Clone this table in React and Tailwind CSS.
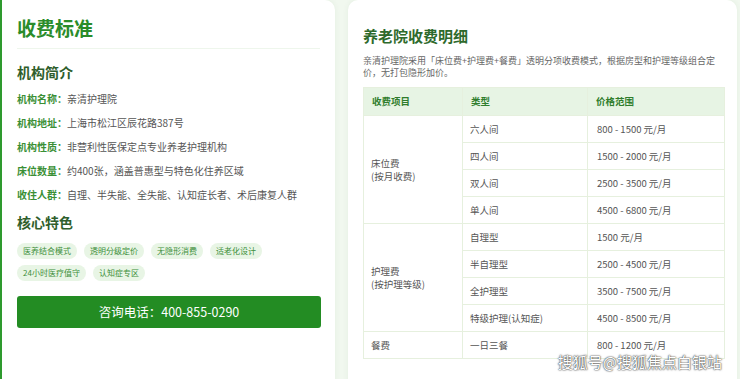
const INFO = [
  ['机构名称：', '亲清护理院'],
  ['机构地址：', '上海市松江区辰花路387号'],
  ['机构性质：', '非营利性医保定点专业养老护理机构'],
  ['床位数量：', '约400张，涵盖普惠型与特色化住养区域'],
  ['收住人群：', '自理、半失能、全失能、认知症长者、术后康复人群'],
];

const TAGS = [['医养结合模式', '透明分级定价', '无隐形消费', '适老化设计'], ['24小时医疗值守', '认知症专区']];

const GROUPS = [
  {
    name: ['床位费', '(按月收费)'],
    rows: [
      ['六人间', '800 - 1500 元/月'],
      ['四人间', '1500 - 2000 元/月'],
      ['双人间', '2500 - 3500 元/月'],
      ['单人间', '4500 - 6800 元/月'],
    ],
  },
  {
    name: ['护理费', '(按护理等级)'],
    rows: [
      ['自理型', '1500 元/月'],
      ['半自理型', '2500 - 4500 元/月'],
      ['全护理型', '3500 - 7500 元/月'],
      ['特级护理(认知症)', '4500 - 8500 元/月'],
    ],
  },
  {
    name: ['餐费'],
    rows: [['一日三餐', '800 - 1200 元/月']],
  },
];

function LeftCard() {
  return (
    <div className="w-[335px] h-[400px] shrink-0 bg-white border-l-2 border-[#2e9a2e] rounded-tr-[10px] pl-[15px] pr-[15px] pt-[15px] shadow-[0_0_6px_rgba(0,80,0,0.06)]">
      <h1 className="text-[19px] leading-[26px] font-bold text-[#2a8c2a]">收费标准</h1>
      <div className="mt-[7px] border-b border-[#eef6ec]" />
      <h2 className="mt-[13px] text-[14px] leading-[20px] font-bold text-[#2f5e2c]">机构简介</h2>
      <div className="mt-[4px]">
        {INFO.map(([k, v]) => (
          <div key={k} className="flex items-center h-[24px] text-[10px]">
            <span className="font-bold text-[#3a8f35]">{k}</span>
            <span className="text-[#555]">{v}</span>
          </div>
        ))}
      </div>
      <h2 className="mt-[6px] text-[14px] leading-[20px] font-bold text-[#2f5e2c]">核心特色</h2>
      <div className="mt-[11px] flex flex-col gap-[6px]">
        {TAGS.map((row, i) => (
          <div key={i} className="flex gap-[7px]">
            {row.map((t) => (
              <span key={t} className="h-[16px] px-[6px] flex items-center rounded-full bg-[#e8f5e5] text-[8px] text-[#3d8f3a]">
                {t}
              </span>
            ))}
          </div>
        ))}
      </div>
      <button className="mt-[15px] w-[304px] h-[32px] rounded-[3px] bg-[#238c23] text-white text-[12.5px] flex items-center justify-center">
        咨询电话：400-855-0290
      </button>
    </div>
  );
}

function RightCard() {
  return (
    <div className="relative w-[389px] h-[400px] shrink-0 bg-white rounded-t-[10px] pl-[15px] pr-[13px] pt-[25px] shadow-[0_0_6px_rgba(0,80,0,0.06)]">
      <h1 className="text-[15px] leading-[22px] font-bold text-[#2e6a2c]">养老院收费明细</h1>
      <p className="mt-[8px] w-[355px] text-[9px] leading-[11.5px] text-[#666]">
        亲清护理院采用「床位费+护理费+餐费」透明分项收费模式，根据房型和护理等级组合定价，无打包隐形加价。
      </p>
      <table className="mt-[9px] w-[361px] border-collapse text-[9.5px] text-[#555] table-fixed">
        <colgroup>
          <col className="w-[99px]" />
          <col className="w-[125px]" />
          <col className="w-[137px]" />
        </colgroup>
        <thead>
          <tr className="h-[28px] bg-[#e7f4e4] text-left text-[#2f7d2c] font-bold">
            <th className="px-[8px] border border-[#e6f0de]">收费项目</th>
            <th className="px-[8px] border border-[#e6f0de]">类型</th>
            <th className="px-[8px] border border-[#e6f0de]">价格范围</th>
          </tr>
        </thead>
        <tbody>
          {GROUPS.map((g) =>
            g.rows.map(([type, price], i) => (
              <tr key={type} className="h-[27px]">
                {i === 0 && (
                  <td rowSpan={g.rows.length} className="px-[7px] border border-[#e6f0de] leading-[13px]">
                    {g.name.map((n) => (
                      <div key={n}>{n}</div>
                    ))}
                  </td>
                )}
                <td className="px-[7px] border border-[#e6f0de]">{type}</td>
                <td className="px-[9px] border border-[#e6f0de]">{price}</td>
              </tr>
            ))
          )}
        </tbody>
      </table>
      <div className="absolute right-[15px] top-[352px] text-[15px] leading-[20px] text-white [text-shadow:0_0_2px_#333,0_0_1px_#333]">
        搜狐号@搜狐焦点白银站
      </div>
    </div>
  );
}

export default function App() {
  return (
    <div
      className="w-[740px] h-[379px] overflow-hidden bg-[#f1f8ef] flex items-start gap-[13px]"
      style={{ fontFamily: '"Noto Sans CJK SC", "Noto Sans", sans-serif' }}
    >
      <LeftCard />
      <RightCard />
    </div>
  );
}
